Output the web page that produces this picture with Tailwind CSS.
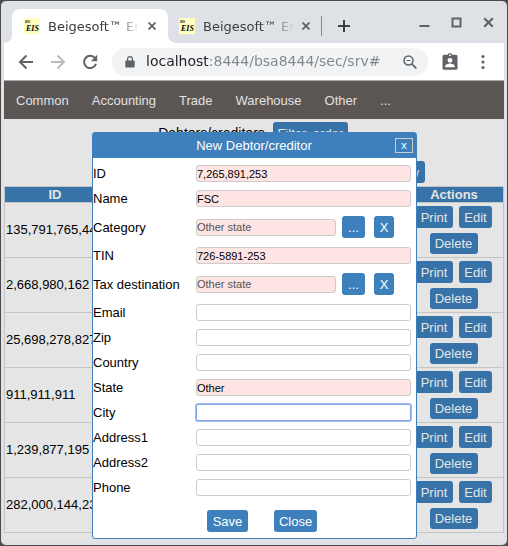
<!DOCTYPE html>
<html lang="en">
<head>
<meta charset="utf-8">
<title>Beigesoft™ Enterprise Information System</title>
<script src="https://cdn.jsdelivr.net/npm/@tailwindcss/browser@4"></script>
</head>
<body class="bg-[#4b4949] font-['Liberation_Sans',Arial,sans-serif] text-[13px] leading-[15px] text-black">
<div class="relative flex min-h-screen flex-col overflow-hidden rounded-md border border-[#4b4949] bg-[#dee1e6] px-[3px] pb-[3px]">

  <!-- Tab strip -->
  <header class="flex h-[42px] items-end pl-2 font-['DejaVu_Sans',sans-serif] text-[#3c4043]">
    <div class="relative flex h-[34px] w-[156px] items-center rounded-t-lg bg-white pl-3">
      <svg class="absolute bottom-0 -left-2 size-2" viewBox="0 0 8 8" fill="#fff" aria-hidden="true"><path d="M8 0v8H0a8 8 0 0 0 8-8z"/></svg>
      <svg class="absolute -right-2 bottom-0 size-2" viewBox="0 0 8 8" fill="#fff" aria-hidden="true"><path d="M0 0v8h8a8 8 0 0 1-8-8z"/></svg>
      <svg class="size-4 shrink-0 bg-[#ffffc0] font-['Liberation_Serif',serif] font-bold italic" viewBox="0 0 16 16" aria-hidden="true"><text x="1" y="5" font-size="4">BS</text><text x="2" y="13" font-size="8">EIS</text></svg>
      <a href="#" class="ml-2 w-[92px] overflow-hidden whitespace-nowrap [mask-image:linear-gradient(to_right,#000_74%,transparent)]">Beigesoft™ En</a>
      <button class="ml-2 flex size-2 items-center" aria-label="Close tab"><svg class="size-2" viewBox="0 0 8 8" stroke="#5f6368" stroke-width="1.8"><path d="M.5.5l7 7M7.500.5l-7 7"/></svg></button>
    </div>
    <div class="flex h-[34px] w-[154px] items-center pl-[11px]">
      <svg class="size-4 shrink-0 bg-[#ffffc0] font-['Liberation_Serif',serif] font-bold italic" viewBox="0 0 16 16" aria-hidden="true"><text x="1" y="5" font-size="4">BS</text><text x="2" y="13" font-size="8">EIS</text></svg>
      <a href="#" class="ml-2 w-[91px] overflow-hidden whitespace-nowrap [mask-image:linear-gradient(to_right,#000_74%,transparent)]">Beigesoft™ En</a>
      <button class="ml-2 flex size-2 items-center" aria-label="Close tab"><svg class="size-2" viewBox="0 0 8 8" stroke="#5f6368" stroke-width="1.8"><path d="M.5.5l7 7M7.500.5l-7 7"/></svg></button>
    </div>
    <div class="mb-[7px] ml-[-1px] h-5 w-px bg-[#85888d]"></div>
    <button class="mb-[11px] ml-4" aria-label="New tab"><svg class="size-3" viewBox="0 0 12 12" stroke="#3c4043" stroke-width="2"><path d="M6 0v12M0 6h12"/></svg></button>
    <div class="mr-[10px] mb-[15px] ml-auto flex items-center gap-[21px] text-[#5f6368]">
      <button aria-label="Minimize"><svg class="size-[11px]" viewBox="0 0 11 11" fill="currentColor"><path d="M.5 8h10v2H.5z"/></svg></button>
      <button aria-label="Maximize"><svg class="size-[11px]" viewBox="0 0 11 11" fill="none" stroke="currentColor" stroke-width="2"><path d="M1.500 1.500h8v8h-8z"/></svg></button>
      <button aria-label="Close window"><svg class="size-[11px]" viewBox="0 0 11 11" stroke="currentColor" stroke-width="2.200"><path d="M1.200 1.200l8.600 8.600M9.800 1.200l-8.600 8.600"/></svg></button>
    </div>
  </header>

  <!-- Toolbar -->
  <div class="flex h-[38px] items-center border-b border-[#a9a9a9] bg-white pr-[14px] pl-[14px]">
    <button aria-label="Back"><svg class="size-4" viewBox="0 0 16 16" fill="none" stroke="#5f6368" stroke-width="2"><path d="M15 8H2.500M8.500 1.500L2 8l6.500 6.500"/></svg></button>
    <button class="ml-4" aria-label="Forward"><svg class="size-4" viewBox="0 0 16 16" fill="none" stroke="#babcbe" stroke-width="2"><path d="M1 8h12.500M7.500 1.500L14 8l-6.500 6.500"/></svg></button>
    <button class="ml-4" aria-label="Reload"><svg class="size-4" viewBox="0 0 16 16"><path d="M13 4.200A6.100 6.100 0 1 0 14 9.800" fill="none" stroke="#5f6368" stroke-width="2"/><path d="M15.200.8v6.400H8.800z" fill="#5f6368"/></svg></button>
    <div class="ml-[14px] flex h-7 min-w-0 flex-1 items-center rounded-full bg-[#f1f3f4] pr-[11px] pl-[13px]">
      <svg class="h-3 w-[10px] shrink-0" viewBox="0 0 10 12" aria-hidden="true"><path d="M1.200 4.500h7.600q.9 0 .9.900v5.200q0 .9-.9.900H1.200q-.9 0-.9-.9V5.400q0-.9.9-.9z" fill="#5f6368"/><path d="M2.600 5V3a2.400 2.400 0 0 1 4.800 0v2" fill="none" stroke="#5f6368" stroke-width="1.200"/></svg>
      <input type="text" aria-label="Address" value="localhost:8444/bsa8444/sec/srv#" class="ml-[11px] min-w-0 flex-1 bg-[linear-gradient(to_right,#202124_64px,#80868b_64px)] bg-clip-text font-['DejaVu_Sans',sans-serif] text-[14px] text-transparent outline-none">
      <button aria-label="Zoom"><svg class="size-[14px]" viewBox="0 0 14 14" fill="none" stroke="#5f6368"><circle cx="5.500" cy="5.500" r="4.500" stroke-width="1.500"/><path d="M3.500 5.500h4" stroke-width="1.200"/><path d="M8.800 8.800l4.500 4.500" stroke-width="1.800"/></svg></button>
    </div>
    <button class="ml-[14px]" aria-label="Profile"><svg class="h-[19px] w-4" viewBox="0 0 16 19"><path d="M2 2.800h3.700a2.400 2.400 0 0 1 4.600 0H14q1.500 0 1.500 1.500v12q0 1.500-1.500 1.500H2q-1.500 0-1.500-1.500v-12Q.5 2.800 2 2.800z" fill="#5f6368"/><circle cx="8" cy="3.200" r=".9" fill="#fff"/><circle cx="8" cy="8.300" r="2.400" fill="#fff"/><path d="M3.200 15.300v-1.100c0-1.700 3.200-2.600 4.800-2.600s4.800.9 4.800 2.600v1.100z" fill="#fff"/></svg></button>
    <button class="ml-[18px]" aria-label="Menu"><svg class="h-4 w-[14px]" viewBox="0 0 14 16" fill="#5f6368"><circle cx="7" cy="2.500" r="1.600"/><circle cx="7" cy="8" r="1.600"/><circle cx="7" cy="13.500" r="1.600"/></svg></button>
  </div>

  <!-- Page -->
  <main class="flex-1 bg-[#e5e5e5]">
    <nav class="flex h-[38px] items-center gap-[23px] bg-[#5b5654] px-3 text-[#e1e1e1]">
      <a href="#">Common</a><a href="#">Accounting</a><a href="#">Trade</a><a href="#">Warehouse</a><a href="#">Other</a><a href="#">...</a>
    </nav>
    <div class="flex items-center justify-center gap-2 pt-[3px] pr-[2px]">
      <h1 class="text-[14px]">Debtors/creditors</h1>
      <button class="h-[22px] w-[75px] rounded-[3px] bg-[#3773a8] text-[#e5e5e5]">Filter, order</button>
    </div>
    <div class="flex justify-end pt-[17px] pr-[79px]">
      <button class="h-[22px] rounded-[3px] bg-[#3773a8] px-[6px] text-[#e5e5e5]">New</button>
    </div>
    <table class="mt-[3px] w-full table-fixed border-collapse border border-[#c5c5c5]">
      <thead>
        <tr class="h-4 bg-[#3773a8] text-[#e5e5e5]">
          <th class="w-[101px] border border-[#c5c5c5]">ID</th>
          <th class="border border-[#c5c5c5]"></th>
          <th class="w-[99px] border border-[#c5c5c5]">Actions</th>
        </tr>
      </thead>
      <tbody id="rows"></tbody>
    </table>
  </main>

  <!-- Edit dialog -->
  <section role="dialog" aria-labelledby="dialog-title" class="absolute top-[131px] right-[90px] left-[91px] rounded-[3px] border border-[#3d80bb] bg-white">
    <div class="flex h-[25px] items-center bg-[#3d80bb] pr-[3px] text-white">
      <h2 id="dialog-title" class="flex-1 pl-5 text-center">New Debtor/creditor</h2>
      <button class="flex h-[15px] w-[18px] items-center justify-center border border-[#ccc] text-[11px]" aria-label="Close dialog">x</button>
    </div>
    <form class="pt-[3px] pb-[6px]">
      <div class="grid h-[25px] grid-cols-[103px_1fr] items-center pr-[5px]">
        <label for="f-id">ID</label>
        <input id="f-id" value="7,265,891,253" class="h-[17px] min-w-0 rounded-[3px] border border-[#ccc] bg-[#ffe4e4] text-[11px]">
      </div>
      <div class="grid h-[25px] grid-cols-[103px_1fr] items-center pr-[5px]">
        <label for="f-name">Name</label>
        <input id="f-name" value="FSC" class="h-[17px] min-w-0 rounded-[3px] border border-[#ccc] bg-[#ffe4e4] text-[11px]">
      </div>
      <div class="flex h-8 items-center">
        <label for="f-cat" class="w-[103px]">Category</label>
        <input id="f-cat" value="Other state" disabled class="h-[17px] w-[140px] rounded-[3px] border border-[#ccc] bg-[#ffe4e4] text-[11px] text-[#545454]">
        <button type="button" class="ml-[6px] h-[22px] w-[23px] rounded-[3px] bg-[#3d80bb] text-white">...</button>
        <button type="button" class="ml-[9px] h-[22px] w-5 rounded-[3px] bg-[#3d80bb] text-white">X</button>
      </div>
      <div class="grid h-[25px] grid-cols-[103px_1fr] items-center pr-[5px]">
        <label for="f-tin">TIN</label>
        <input id="f-tin" value="726-5891-253" class="h-[17px] min-w-0 rounded-[3px] border border-[#ccc] bg-[#ffe4e4] text-[11px]">
      </div>
      <div class="flex h-8 items-center">
        <label for="f-tax" class="w-[103px]">Tax destination</label>
        <input id="f-tax" value="Other state" disabled class="h-[17px] w-[140px] rounded-[3px] border border-[#ccc] bg-[#ffe4e4] text-[11px] text-[#545454]">
        <button type="button" class="ml-[6px] h-[22px] w-[23px] rounded-[3px] bg-[#3d80bb] text-white">...</button>
        <button type="button" class="ml-[9px] h-[22px] w-5 rounded-[3px] bg-[#3d80bb] text-white">X</button>
      </div>
      <div class="grid h-[25px] grid-cols-[103px_1fr] items-center pr-[5px]">
        <label for="f-email">Email</label>
        <input id="f-email" class="h-[17px] min-w-0 rounded-[3px] border border-[#ccc] bg-white text-[11px]">
      </div>
      <div class="grid h-[25px] grid-cols-[103px_1fr] items-center pr-[5px]">
        <label for="f-zip">Zip</label>
        <input id="f-zip" class="h-[17px] min-w-0 rounded-[3px] border border-[#ccc] bg-white text-[11px]">
      </div>
      <div class="grid h-[25px] grid-cols-[103px_1fr] items-center pr-[5px]">
        <label for="f-country">Country</label>
        <input id="f-country" class="h-[17px] min-w-0 rounded-[3px] border border-[#ccc] bg-white text-[11px]">
      </div>
      <div class="grid h-[25px] grid-cols-[103px_1fr] items-center pr-[5px]">
        <label for="f-state">State</label>
        <input id="f-state" value="Other" class="h-[17px] min-w-0 rounded-[3px] border border-[#ccc] bg-[#ffe4e4] text-[11px]">
      </div>
      <div class="grid h-[25px] grid-cols-[103px_1fr] items-center pr-[5px]">
        <label for="f-city">City</label>
        <input id="f-city" class="h-[17px] min-w-0 rounded-xs border border-[#85a7e8] bg-white text-[11px] ring-1 ring-[#a3bff2] outline-none">
      </div>
      <div class="grid h-[25px] grid-cols-[103px_1fr] items-center pr-[5px]">
        <label for="f-addr1">Address1</label>
        <input id="f-addr1" class="h-[17px] min-w-0 rounded-[3px] border border-[#ccc] bg-white text-[11px]">
      </div>
      <div class="grid h-[25px] grid-cols-[103px_1fr] items-center pr-[5px]">
        <label for="f-addr2">Address2</label>
        <input id="f-addr2" class="h-[17px] min-w-0 rounded-[3px] border border-[#ccc] bg-white text-[11px]">
      </div>
      <div class="grid h-[25px] grid-cols-[103px_1fr] items-center pr-[5px]">
        <label for="f-phone">Phone</label>
        <input id="f-phone" class="h-[17px] min-w-0 rounded-[3px] border border-[#ccc] bg-white text-[11px]">
      </div>
      <div class="flex justify-center gap-[26px] pt-[10px] pl-[15px]">
        <button type="button" class="h-[22px] w-[41px] rounded-[3px] bg-[#3d80bb] text-white">Save</button>
        <button type="button" class="h-[22px] w-[43px] rounded-[3px] bg-[#3d80bb] text-white">Close</button>
      </div>
    </form>
  </section>
</div>
<script>
  const ids = ["135,791,765,44", "2,668,980,162", "25,698,278,827", "911,911,911", "1,239,877,195", "282,000,144,23"];
  document.getElementById("rows").innerHTML = ids.map(id => `
    <tr class="h-[55px]">
      <td class="border border-[#c5c5c5] pb-px pl-px">${id}</td>
      <td class="border border-[#c5c5c5]"></td>
      <td class="border border-[#c5c5c5] pr-px">
        <div class="flex justify-center gap-[6px]">
          <button class="h-[22px] w-[38px] rounded-[3px] bg-[#3773a8] text-[#e5e5e5]">Print</button>
          <button class="h-[22px] w-[33px] rounded-[3px] bg-[#3773a8] text-[#e5e5e5]">Edit</button>
        </div>
        <div class="mt-[5px] flex justify-center">
          <button class="h-[21px] w-12 rounded-[3px] bg-[#3773a8] text-[#e5e5e5]">Delete</button>
        </div>
      </td>
    </tr>`).join("");
</script>
</body>
</html>
